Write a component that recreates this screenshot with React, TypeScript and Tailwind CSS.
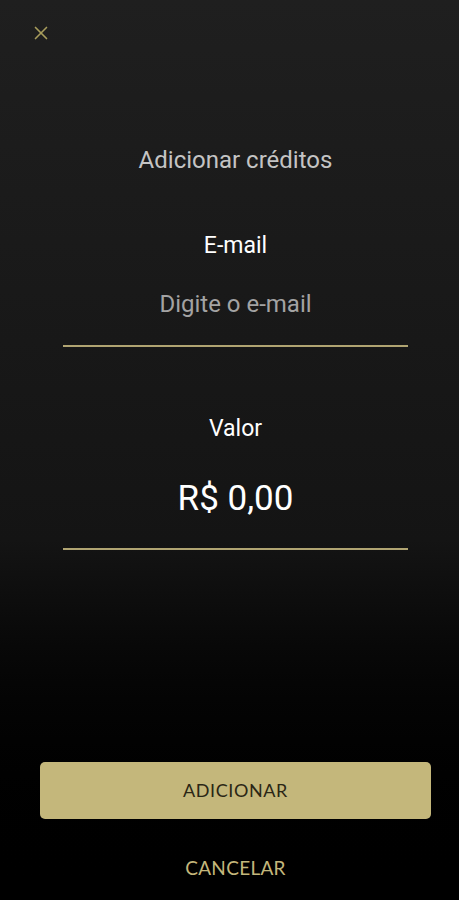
import { X } from "lucide-react";

export default function App() {
  return (
    <div className="h-[900px] w-full flex flex-col bg-gradient-to-b from-[#1f1f1f] via-[#141414] via-60% to-black font-['Roboto',sans-serif]">
      <div className="h-[66px] pl-[30px] pt-[22px]">
        <X className="w-[22px] h-[22px] text-[#a89d5c]" strokeWidth={1.8} />
      </div>

      <div className="pl-[12px] flex flex-col">
        <div className="mt-[80px] text-center text-[24px] leading-[28px] text-[#c4c4c4]">Adicionar créditos</div>

        <div className="mt-[59px] text-center text-[23px] leading-[26px] text-white">E-mail</div>
        <div className="mt-[31px] text-center text-[24px] leading-[28px] text-[#a3a3a3]">Digite o e-mail</div>
      </div>
      <div className="ml-[63px] mr-[51px] mt-[27px] h-[2px] bg-[#b0a472]" />

      <div className="pl-[12px] flex flex-col">
        <div className="mt-[69px] text-center text-[23px] leading-[26px] text-white">Valor</div>
        <div className="mt-[39px] text-center text-[35px] leading-[36px] text-white">R$ 0,00</div>
      </div>
      <div className="ml-[63px] mr-[51px] mt-[31px] h-[2px] bg-[#b0a472]" />

      <div className="flex-1" />

      <div className="pl-[40px] pr-[28px]">
        <button className="w-full h-[57px] rounded-[5px] bg-[#c4b77b] text-[#2a2615] text-[18px] tracking-[0.6px] font-['Lato',sans-serif]">
          ADICIONAR
        </button>
      </div>
      <div className="pl-[12px] mt-[37px] mb-[20px] text-center text-[19px] leading-[24px] tracking-[0.3px] text-[#c4b77b] font-['Lato',sans-serif]">
        CANCELAR
      </div>
    </div>
  );
}
